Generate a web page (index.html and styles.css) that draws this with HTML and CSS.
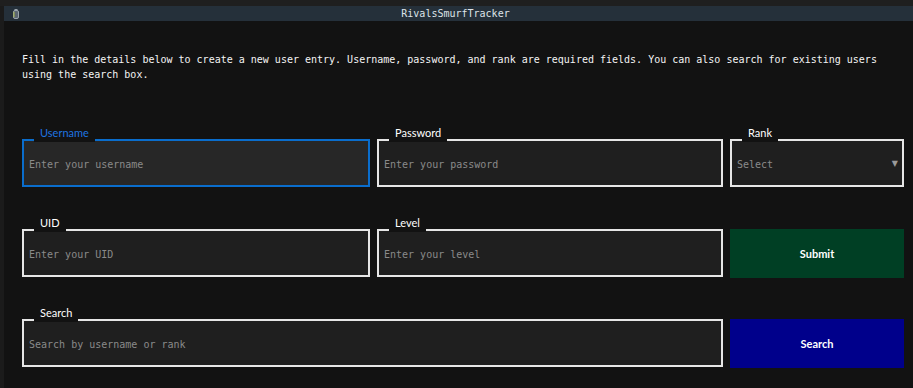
FILE: index.html
```html
<!DOCTYPE html>
<html lang="en">
<head>
  <meta charset="UTF-8">
  <title>RivalsSmurfTracker</title>
  <link rel="stylesheet" href="styles.css">
</head>
<body>
  <div class="top-strip"></div>
  <div class="frame">
    <div class="edge"></div>
    <div class="app">
      <div class="titlebar">
        <svg class="app-icon" width="6" height="10" viewBox="0 0 6 10">
          <rect x="0.5" y="1.5" width="5" height="8" rx="1.5" fill="#5b6670" stroke="#9aa3ab"/>
          <rect x="1.5" y="0" width="3" height="2" fill="#9aa3ab"/>
          <rect x="0.5" y="3" width="1" height="5" fill="#a9b84a"/>
        </svg>
        <span class="title">RivalsSmurfTracker</span>
      </div>

      <main class="content">
        <p class="intro">Fill in the details below to create a new user entry. Username, password, and rank are required fields. You can also search for existing users using the search box.</p>

        <form class="entry-grid">
          <div class="field focused">
            <label class="legend">Username</label>
            <input type="text" placeholder="Enter your username">
          </div>
          <div class="field">
            <label class="legend">Password</label>
            <input type="password" placeholder="Enter your password">
          </div>
          <div class="field select-field">
            <label class="legend">Rank</label>
            <span class="select-text">Select</span>
            <span class="arrow">&#9660;</span>
          </div>

          <div class="field">
            <label class="legend">UID</label>
            <input type="text" placeholder="Enter your UID">
          </div>
          <div class="field">
            <label class="legend">Level</label>
            <input type="text" placeholder="Enter your level">
          </div>
          <button type="button" class="btn btn-submit">Submit</button>

          <div class="field wide">
            <label class="legend">Search</label>
            <input type="text" placeholder="Search by username or rank">
          </div>
          <button type="button" class="btn btn-search">Search</button>
        </form>
      </main>
    </div>
  </div>
</body>
</html>
```

FILE: styles.css
```css
body {
  margin: 0;
  background: #121212;
  color: #f2f2f2;
  font-family: 'DejaVu Sans Mono', monospace;
  height: 388px;
  overflow: hidden;
}
.top-strip {
  height: 6px;
  background: #1f1f1f;
}
.frame {
  display: flex;
  height: 382px;
}
.edge {
  width: 4px;
  background: #1b1b1b;
}
.app {
  flex: 1;
  display: flex;
  flex-direction: column;
}
.titlebar {
  position: relative;
  height: 15px;
  background: #25303a;
  display: flex;
  align-items: center;
  justify-content: center;
}
.app-icon {
  position: absolute;
  left: 9px;
  top: 3px;
}
.title {
  font-size: 10px;
  color: #dde3e8;
  margin-left: -6px;
}
.content {
  padding: 31px 9px 0 18px;
}
.intro {
  margin: 0;
  font-size: 10px;
  line-height: 15px;
  color: #f4f4f4;
}
.entry-grid {
  margin-top: 57px;
  display: grid;
  grid-template-columns: 348fr 346fr 174fr;
  grid-auto-rows: 48px;
  column-gap: 7px;
  row-gap: 42px;
}
.field {
  position: relative;
  height: 48px;
  box-sizing: border-box;
  border: 2px solid #e6e6e6;
  background: #1f1f1f;
  display: flex;
  align-items: center;
}
.field.wide {
  grid-column: span 2;
}
.field.focused {
  border-color: #0a6dcc;
  background: #272727;
}
.legend {
  position: absolute;
  left: 10px;
  top: -14px;
  padding: 0 6px 3px;
  background: #121212;
  font-family: 'Lato', 'Noto Sans', sans-serif;
  font-size: 11px;
  line-height: 12px;
  color: #ffffff;
}
.focused .legend {
  color: #1f74e0;
}
.field input {
  flex: 1;
  background: transparent;
  border: none;
  outline: none;
  padding: 2px 5px 0;
  font-family: 'DejaVu Sans Mono', monospace;
  font-size: 10px;
  color: #f2f2f2;
}
.field input::placeholder {
  color: #8a8a8a;
}
.select-text {
  padding: 2px 0 0 5px;
  font-size: 10px;
  color: #8a8a8a;
  flex: 1;
}
.arrow {
  font-family: 'DejaVu Sans', sans-serif;
  font-size: 8px;
  color: #9a9a9a;
  padding: 1px 4px 0 0;
}
.btn {
  height: 49px;
  border: none;
  font-family: 'Lato', 'Noto Sans', sans-serif;
  font-weight: bold;
  font-size: 11px;
  color: #ffffff;
  cursor: pointer;
}
.btn-submit {
  background: #003f24;
}
.btn-search {
  background: #00008b;
}
```
